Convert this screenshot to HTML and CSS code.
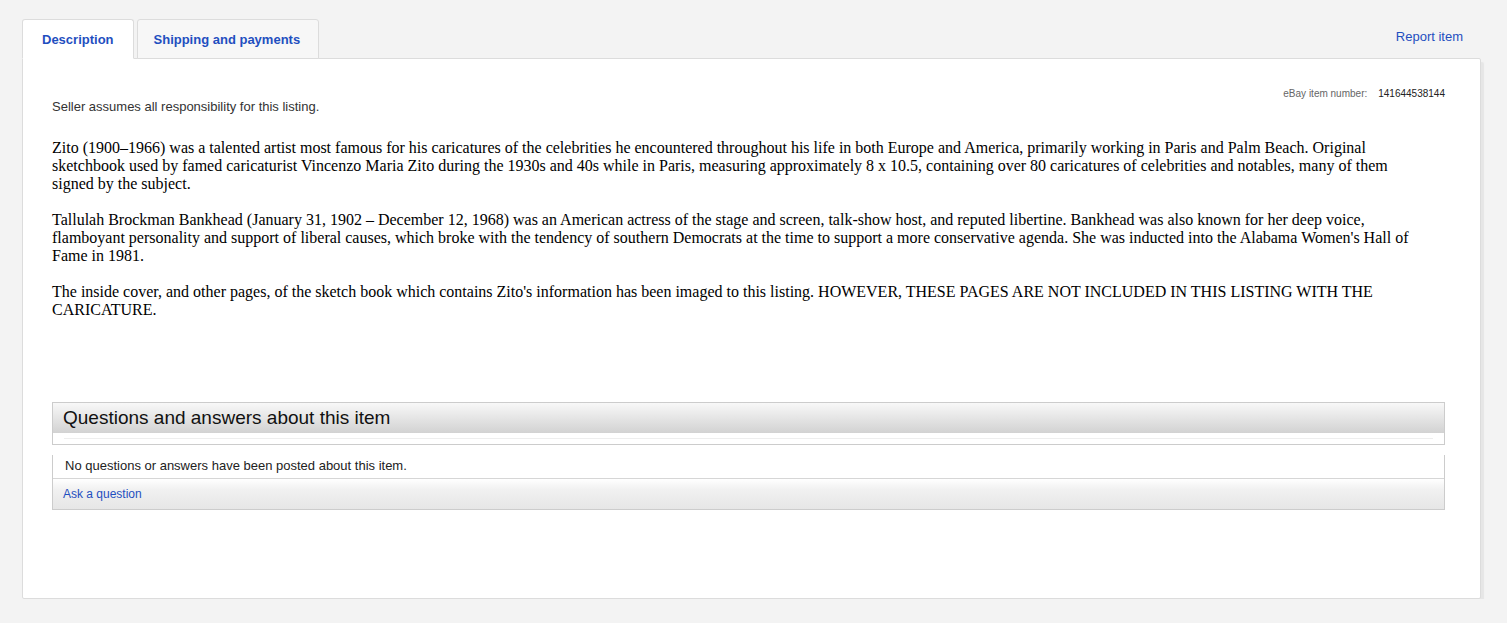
FILE: index.html
```html
<!DOCTYPE html>
<html lang="en">

<head>
    <meta charset="UTF-8">
    <meta name="viewport" content="width=device-width, initial-scale=1.0">
    <title>Item description</title>
    <link rel="stylesheet" href="styles.css">
</head>

<body>
    <div id="itemTabs">
        <div class="tabBar">
            <ul class="tabs">
                <li class="tab active">Description</li>
                <li class="tab">Shipping and payments</li>
            </ul>
            <a href="#" class="report">Report item</a>
        </div>

        <div class="panel">
            <div class="meta">
                <span class="seller">Seller assumes all responsibility for this listing.</span>
                <span class="itemNumber"><span class="label">eBay item number:</span><span class="num">141644538144</span></span>
            </div>

            <div class="desc">
                <p>Zito (1900–1966) was a talented artist most famous for his caricatures of the celebrities he encountered throughout his life in both Europe and America, primarily working in Paris and Palm Beach. Original sketchbook used by famed caricaturist Vincenzo Maria Zito during the 1930s and 40s while in Paris, measuring approximately 8 x 10.5, containing over 80 caricatures of celebrities and notables, many of them signed by the subject.</p>
                <p>Tallulah Brockman Bankhead (January 31, 1902 – December 12, 1968) was an American actress of the stage and screen, talk-show host, and reputed libertine. Bankhead was also known for her deep voice, flamboyant personality and support of liberal causes, which broke with the tendency of southern Democrats at the time to support a more conservative agenda. She was inducted into the Alabama Women's Hall of Fame in 1981.</p>
                <p>The inside cover, and other pages, of the sketch book which contains Zito's information has been imaged to this listing. HOWEVER, THESE PAGES ARE NOT INCLUDED IN THIS LISTING WITH THE CARICATURE.</p>
            </div>

            <div class="qaHead">
                <h2>Questions and answers about this item</h2>
                <div class="qaRule"></div>
            </div>
            <div class="qaBody">
                <div class="qaEmpty">No questions or answers have been posted about this item.</div>
                <div class="qaAsk"><a href="#">Ask a question</a></div>
            </div>
        </div>
    </div>
</body>

</html>
```

FILE: styles.css
```css
html {
    margin: 0;
    font-family: "Liberation Sans", Arial, sans-serif;
}

body {
    margin: 0;
    padding: 19px 0 0 22px;
    background-color: #f3f3f3;
}

#itemTabs {
    width: 1459px;
}

.tabBar {
    display: flex;
    justify-content: space-between;
    align-items: flex-start;
    position: relative;
    z-index: 1;
    margin-bottom: -1px;
}

.tabs {
    display: flex;
    gap: 3px;
    list-style: none;
    margin: 0;
    padding: 0;
}

.tab {
    height: 37px;
    line-height: 37px;
    padding: 1px 18px 0 16px;
    border: solid 1px #dcdcdc;
    border-radius: 3px 3px 0 0;
    background-color: #f7f7f7;
    color: #1f4fc0;
    font-size: 13px;
    font-weight: 700;
}

.tab.active {
    padding: 1px 19px 0;
    background-color: #ffffff;
    border-bottom-color: #ffffff;
}

.report {
    margin: 10px 18px 0 0;
    color: #1f4fc0;
    font-size: 13px;
    text-decoration: none;
}

.panel {
    height: 510px;
    padding: 29px 35px 0 29px;
    background-color: #ffffff;
    border: solid 1px #dcdcdc;
    border-radius: 0 2px 2px 2px;
    box-shadow: 3px 4px 1px #e6e6e6;
}

.meta {
    display: flex;
    justify-content: space-between;
    align-items: flex-start;
}

.seller {
    margin-top: 11px;
    font-size: 13px;
    line-height: 15px;
    color: #333333;
}

.itemNumber {
    font-size: 10px;
    line-height: 12px;
    color: #666666;
}

.itemNumber .num {
    margin-left: 11px;
    color: #222222;
}

.desc {
    margin-top: 25px;
    margin-right: 20px;
    font-family: "Liberation Serif", "Times New Roman", serif;
    font-size: 16px;
    line-height: 18px;
    color: #000000;
}

.desc p {
    margin: 0 0 18px;
}

.qaHead {
    margin-top: 83px;
    border: solid 1px #cccccc;
}

.qaHead h2 {
    margin: 0;
    height: 30px;
    line-height: 30px;
    padding-left: 10px;
    font-size: 19px;
    font-weight: 400;
    color: #111111;
    background-image: linear-gradient(#f8f8f8, #d2d2d2);
}

.qaRule {
    height: 1px;
    margin: 5px 11px 5px 11px;
    background-color: #eeeeee;
}

.qaBody {
    margin-top: 10px;
    border: solid 1px #cccccc;
    border-top: none;
}

.qaEmpty {
    height: 23px;
    line-height: 22px;
    padding-left: 12px;
    font-size: 13px;
    color: #222222;
    border-bottom: solid 1px #d6d6d6;
}

.qaAsk {
    height: 30px;
    line-height: 30px;
    padding-left: 10px;
    font-size: 12px;
    background-image: linear-gradient(#ffffff, #f1f1f1 35%, #e6e6e6);
}

.qaAsk a {
    color: #1f4fc0;
    text-decoration: none;
}
```
